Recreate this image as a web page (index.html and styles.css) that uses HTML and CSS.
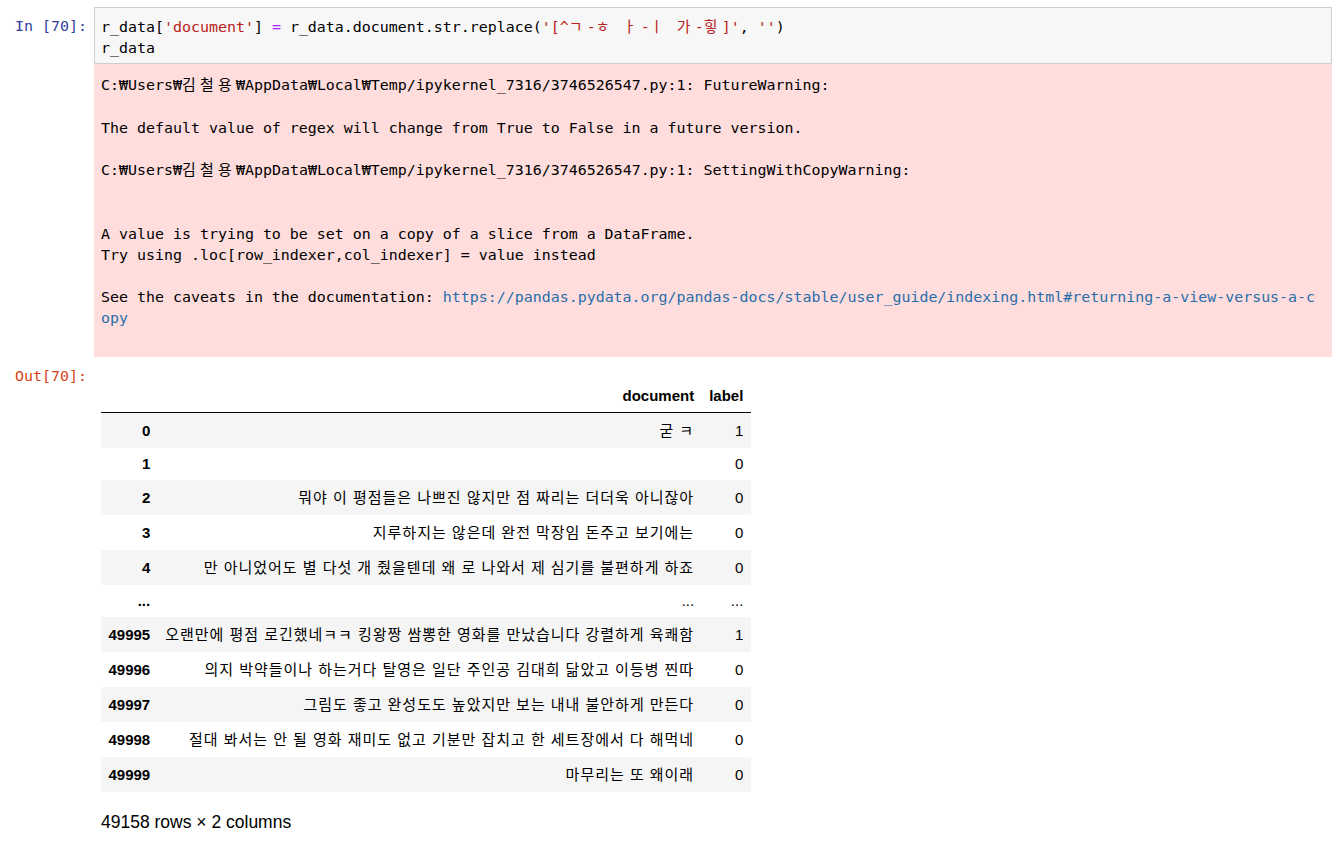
FILE: index.html
```html
<!DOCTYPE html>
<html lang="ko">
<head>
<meta charset="utf-8">
<title>r_data</title>
<link rel="stylesheet" href="styles.css">
</head>
<body>
<div class="cell">
  <div class="row">
    <div class="prompt prompt-in">In [70]:</div>
    <div class="input-area">
      <div class="code">
        <div class="ln">r_data[<span class="s">'document'</span>] <span class="o">=</span> r_data.document.str.replace(<span class="s">'[^<span class="k">ㄱ</span>-<span class="k">ㅎ</span> <span class="k">ㅏ</span>-<span class="k">ㅣ</span> <span class="k">가</span>-<span class="k">힣</span>]'</span>, <span class="s">''</span>)</div>
        <div class="ln">r_data</div>
      </div>
    </div>
  </div>
  <div class="row">
    <div class="prompt"></div>
    <div class="stderr">
      <div class="code">
        <div class="ln">C:₩Users₩<span class="k">김철용</span>₩AppData₩Local₩Temp/ipykernel_7316/3746526547.py:1: FutureWarning:</div>
        <div class="ln"></div>
        <div class="ln">The default value of regex will change from True to False in a future version.</div>
        <div class="ln"></div>
        <div class="ln">C:₩Users₩<span class="k">김철용</span>₩AppData₩Local₩Temp/ipykernel_7316/3746526547.py:1: SettingWithCopyWarning:</div>
        <div class="ln"></div>
        <div class="ln"></div>
        <div class="ln">A value is trying to be set on a copy of a slice from a DataFrame.</div>
        <div class="ln">Try using .loc[row_indexer,col_indexer] = value instead</div>
        <div class="ln"></div>
        <div class="ln">See the caveats in the documentation: <a class="link" href="#">https://pandas.pydata.org/pandas-docs/stable/user_guide/indexing.html#returning-a-view-versus-a-c</a></div>
        <div class="ln"><a class="link" href="#">opy</a></div>
      </div>
    </div>
  </div>
  <div class="row">
    <div class="prompt prompt-out">Out[70]:</div>
    <div class="result">
      <table class="dataframe">
        <thead>
          <tr><th></th><th>document</th><th>label</th></tr>
        </thead>
        <tbody>
          <tr class="tall"><th>0</th><td class="doc">굳 ㅋ</td><td>1</td></tr>
          <tr><th>1</th><td class="doc"></td><td>0</td></tr>
          <tr class="tall"><th>2</th><td class="doc">뭐야 이 평점들은 나쁘진 않지만 점 짜리는 더더욱 아니잖아</td><td>0</td></tr>
          <tr class="tall"><th>3</th><td class="doc">지루하지는 않은데 완전 막장임 돈주고 보기에는</td><td>0</td></tr>
          <tr class="tall"><th>4</th><td class="doc">만 아니었어도 별 다섯 개 줬을텐데 왜 로 나와서 제 심기를 불편하게 하죠</td><td>0</td></tr>
          <tr><th>...</th><td>...</td><td>...</td></tr>
          <tr class="tall"><th>49995</th><td class="doc">오랜만에 평점 로긴했네ㅋㅋ 킹왕짱 쌈뽕한 영화를 만났습니다 강렬하게 육쾌함</td><td>1</td></tr>
          <tr class="tall"><th>49996</th><td class="doc">의지 박약들이나 하는거다 탈영은 일단 주인공 김대희 닮았고 이등병 찐따</td><td>0</td></tr>
          <tr class="tall"><th>49997</th><td class="doc">그림도 좋고 완성도도 높았지만 보는 내내 불안하게 만든다</td><td>0</td></tr>
          <tr class="tall"><th>49998</th><td class="doc">절대 봐서는 안 될 영화 재미도 없고 기분만 잡치고 한 세트장에서 다 해먹네</td><td>0</td></tr>
          <tr class="tall"><th>49999</th><td class="doc">마무리는 또 왜이래</td><td>0</td></tr>
        </tbody>
      </table>
      <p class="shape">49158 rows × 2 columns</p>
    </div>
  </div>
</div>
</body>
</html>
```

FILE: styles.css
```css
html, body {
  margin: 0;
  padding: 0;
  background: #ffffff;
}

body {
  font-family: "Liberation Sans", "Noto Sans CJK KR", sans-serif;
  color: #000000;
}

.cell {
  padding-top: 7px;
}

.row {
  display: flex;
  align-items: flex-start;
}

.prompt {
  flex: none;
  width: 94px;
  box-sizing: border-box;
  padding-right: 7px;
  text-align: right;
  font-family: "DejaVu Sans Mono", "Noto Sans CJK KR", monospace;
  font-size: 14.95px;
  line-height: 21.2px;
  white-space: pre;
}

.prompt-in {
  color: #303f9f;
  padding-top: 9px;
}

.prompt-out {
  color: #d84315;
  padding-top: 9px;
}

.code {
  font-family: "DejaVu Sans Mono", "Noto Sans CJK KR", monospace;
  font-size: 14.95px;
  line-height: 21.2px;
  color: #000000;
}

.code .ln {
  height: 21.2px;
  white-space: pre;
}

.code .k {
  font-family: "Noto Sans CJK KR", sans-serif;
  letter-spacing: 4.25px;
  line-height: 1;
}

.code .s {
  color: #ba2121;
}

.code .o {
  color: #aa22ff;
}

.input-area {
  flex: 1;
  min-width: 0;
  margin-right: 10px;
  border: 1px solid #cfcfcf;
  background: #f7f7f7;
  padding: 9px 6px 4px 6px;
}

.stderr {
  flex: 1;
  min-width: 0;
  margin-right: 10px;
  background: #ffdddd;
  padding: 11px 7px 27px 7px;
}

.link {
  color: #296eaa;
  text-decoration: none;
}

.result {
  flex: 1;
  min-width: 0;
  padding: 23px 0 0 7px;
}

.dataframe {
  border-collapse: separate;
  border-spacing: 0;
  font-size: 15px;
  color: #000000;
}

.dataframe th,
.dataframe td {
  padding: 0 7.5px;
  line-height: 17px;
  text-align: right;
  vertical-align: middle;
  white-space: nowrap;
}

.dataframe th {
  font-weight: bold;
}

.dataframe td {
  font-weight: normal;
}

.dataframe td.doc {
  letter-spacing: 0.98px;
}

.dataframe thead tr {
  height: 33px;
}

.dataframe thead th {
  border-bottom: 1px solid #000000;
}

.dataframe tbody tr {
  height: 32px;
}

.dataframe tbody tr.tall {
  height: 35px;
}

.dataframe tbody tr:nth-child(odd) {
  background: #f5f5f5;
}

.shape {
  margin: 18px 0 0 0;
  font-size: 17.5px;
  line-height: 25px;
}
```
